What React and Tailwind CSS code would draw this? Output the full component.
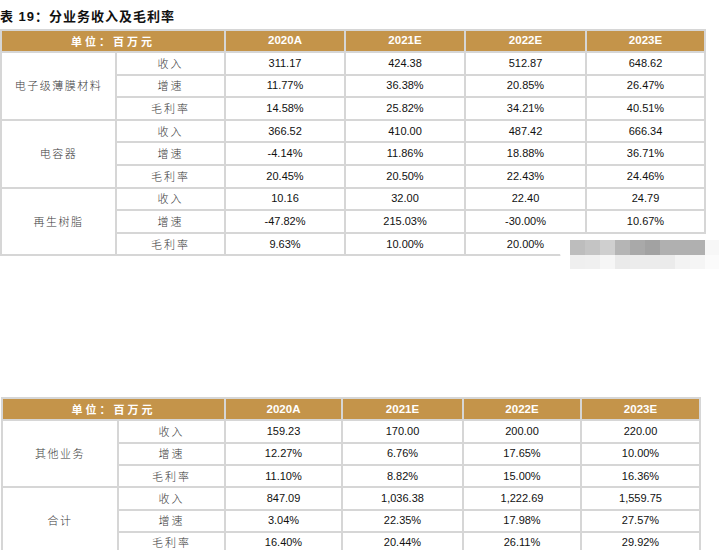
import React from 'react';

const cjk = { fontFamily: '"Noto Sans CJK SC", sans-serif' };

const groups1 = [
  {
    name: '电子级薄膜材料',
    rows: [
      ['收入', '311.17', '424.38', '512.87', '648.62'],
      ['增速', '11.77%', '36.38%', '20.85%', '26.47%'],
      ['毛利率', '14.58%', '25.82%', '34.21%', '40.51%'],
    ],
  },
  {
    name: '电容器',
    rows: [
      ['收入', '366.52', '410.00', '487.42', '666.34'],
      ['增速', '-4.14%', '11.86%', '18.88%', '36.71%'],
      ['毛利率', '20.45%', '20.50%', '22.43%', '24.46%'],
    ],
  },
  {
    name: '再生树脂',
    rows: [
      ['收入', '10.16', '32.00', '22.40', '24.79'],
      ['增速', '-47.82%', '215.03%', '-30.00%', '10.67%'],
      ['毛利率', '9.63%', '10.00%', '20.00%', ''],
    ],
  },
];

const groups2 = [
  {
    name: '其他业务',
    rows: [
      ['收入', '159.23', '170.00', '200.00', '220.00'],
      ['增速', '12.27%', '6.76%', '17.65%', '10.00%'],
      ['毛利率', '11.10%', '8.82%', '15.00%', '16.36%'],
    ],
  },
  {
    name: '合计',
    rows: [
      ['收入', '847.09', '1,036.38', '1,222.69', '1,559.75'],
      ['增速', '3.04%', '22.35%', '17.98%', '27.57%'],
      ['毛利率', '16.40%', '20.44%', '26.11%', '29.92%'],
    ],
  },
];

const years = ['2020A', '2021E', '2022E', '2023E'];

function DataTable({ groups, widths, tableW, rowH }) {
  return (
    <table className={`border-collapse table-fixed ${tableW}`}>
      <colgroup>
        {widths.map((w, i) => (
          <col key={i} className={w} />
        ))}
      </colgroup>
      <thead>
        <tr className="h-[22px] bg-[#c4944a]">
          <th
            colSpan={2}
            className="border-2 border-[#d6d6d6] p-0 text-[11px] font-bold text-white tracking-[3px] leading-none"
            style={cjk}
          >
            单位：百万元
          </th>
          {years.map((y) => (
            <th
              key={y}
              className="border-2 border-[#d6d6d6] p-0 text-[11.5px] font-bold text-white leading-none"
              style={{ fontFamily: '"Liberation Sans", Arial, sans-serif' }}
            >
              {y}
            </th>
          ))}
        </tr>
      </thead>
      <tbody>
        {groups.map((g) =>
          g.rows.map((r, ri) => (
            <tr key={g.name + ri} className={rowH}>
              {ri === 0 && (
                <td
                  rowSpan={3}
                  className="border-2 border-[#d6d6d6] p-0 text-center text-[11px] font-light text-[#3a3a3a] tracking-[1.5px] leading-none"
                  style={cjk}
                >
                  {g.name}
                </td>
              )}
              <td
                className="border-2 border-[#d6d6d6] p-0 text-center text-[11px] font-light text-[#3a3a3a] tracking-[2px] leading-none"
                style={cjk}
              >
                {r[0]}
              </td>
              {r.slice(1).map((v, vi) => (
                <td
                  key={vi}
                  className="border-2 border-[#d6d6d6] p-0 text-center text-[11px] text-[#111] leading-none"
                  style={{ fontFamily: '"Liberation Sans", Arial, sans-serif' }}
                >
                  {v}
                </td>
              ))}
            </tr>
          ))
        )}
      </tbody>
    </table>
  );
}

const topBlocks = ['#bdbdbd', '#c4c4c4', '#cfcfcf', '#b5b5b5', '#a9a9a9', '#a2a2a2', '#b0b0b0', '#b0b0b0', '#b0b0b0'];
const lowBlocks = ['#efefef', '#f0f0f0', '#f6f6f6', '#eaeaea', '#ececec', '#ececec', '#ebebeb', '#f3f3f3', '#f5f5f5'];

export default function App() {
  return (
    <div className="relative w-[719px] h-[550px] overflow-hidden bg-white">
      <div
        className="h-[29px] pt-[9px] text-[13px] font-bold text-[#111] leading-[16px] tracking-[1px]"
        style={{ fontFamily: '"Liberation Sans", "Noto Sans CJK SC", sans-serif' }}
      >
        表 19：分业务收入及毛利率
      </div>
      <DataTable
        groups={groups1}
        tableW="w-[704px]"
        rowH="h-[22.6px]"
        widths={['w-[115px]', 'w-[109px]', 'w-[120px]', 'w-[120px]', 'w-[121px]', 'w-[119px]']}
      />
      <div className="h-[141px]" />
      <div className="pl-[1px]">
        <DataTable
          groups={groups2}
          tableW="w-[698px]"
          rowH="h-[22.3px]"
          widths={['w-[116px]', 'w-[107px]', 'w-[117px]', 'w-[121px]', 'w-[118px]', 'w-[119px]']}
        />
      </div>

      {/* mosaic blur overlay */}
      <div className="absolute left-[560px] top-[234px] w-[159px] h-[36px] bg-white rounded-l-[18px]">
        <div className="absolute left-[10px] top-[6px] flex">
          {topBlocks.map((c, i) => (
            <div key={i} className="w-[15px] h-[15px]" style={{ backgroundColor: c }} />
          ))}
          <div className="w-[15px] h-[15px] bg-[#f7f7f7]" />
        </div>
        <div className="absolute left-[10px] top-[21px] flex">
          {lowBlocks.map((c, i) => (
            <div key={i} className="w-[15px] h-[14px]" style={{ backgroundColor: c }} />
          ))}
          <div className="w-[15px] h-[14px] bg-[#fbfbfb]" />
        </div>
      </div>
    </div>
  );
}
